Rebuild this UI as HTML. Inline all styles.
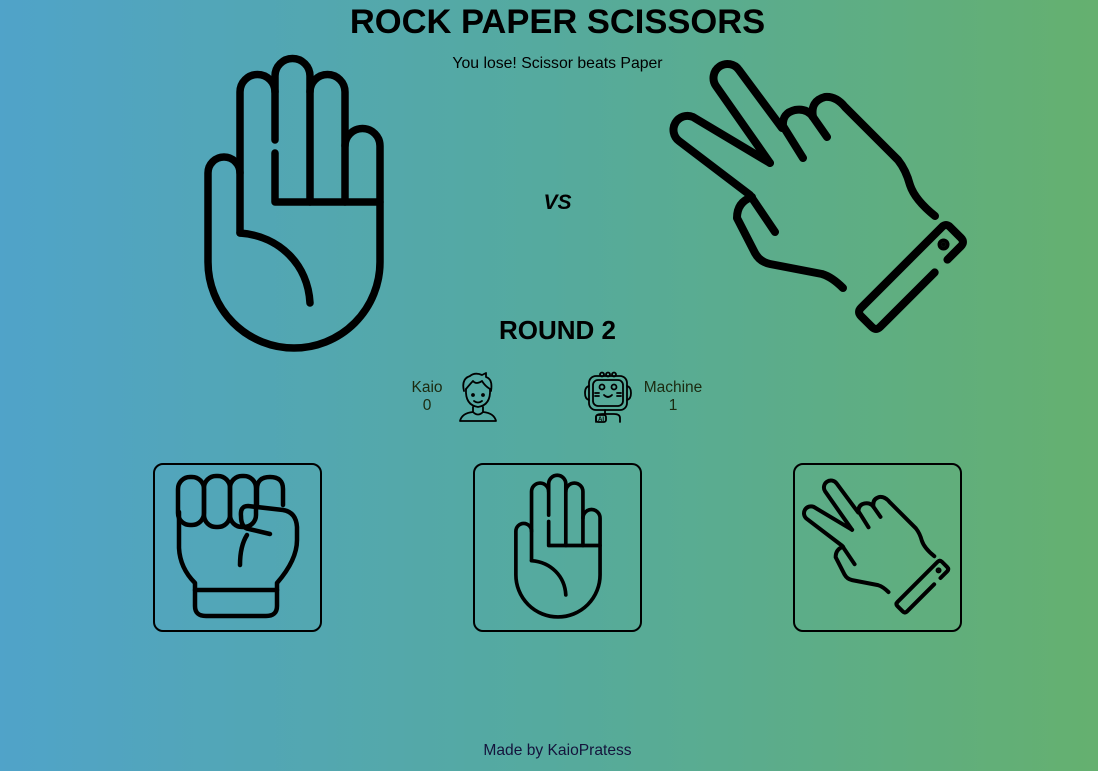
<!DOCTYPE html>
<html><head><meta charset="utf-8">
<style>
html,body{margin:0;padding:0;}
body{width:1098px;height:771px;overflow:hidden;position:relative;
background:linear-gradient(90deg,#50a3c9 0%,#55aa9e 50%,#65b06f 100%);
font-family:"Liberation Sans",Arial,sans-serif;color:#000;}
.t{position:absolute;left:0;width:1115px;text-align:center;white-space:nowrap;}
svg{position:absolute;overflow:visible;}
.box{position:absolute;top:463px;width:165px;height:165px;border:2px solid #000;border-radius:10px;}
</style></head><body>
<svg width="0" height="0" style="position:absolute">
<defs>
<symbol id="paper" viewBox="196 50 190 302">
<g fill="none" stroke="#000" stroke-width="7.5" stroke-linecap="round" stroke-linejoin="round">
<path d="M240 233 V92 A17.5 17.5 0 0 1 275 92 V140 M275 153 V202 H380"/>
<path d="M275 92 V76 A17.5 17.5 0 0 1 310 76 V202"/>
<path d="M310 92 A17.5 17.5 0 0 1 345 92 V202"/>
<path d="M345 146 A17.5 17.5 0 0 1 380 146 V262 A86 86 0 0 1 208 262 V173 A16 16 0 0 1 240 173"/>
<path d="M240 233 C280 236 308 265 310 303"/>
</g></symbol>
<symbol id="sci" viewBox="668 55 306 287">
<g fill="none" stroke="#000" stroke-width="8" stroke-linecap="round" stroke-linejoin="round">
<path d="M770 163 L716 86 A14 14 0 0 1 739 70 L782 128"/>
<path d="M770 163 L693 117 A14 14 0 0 0 679 141 L750 195"/>
<path d="M752 197 Q737 202 737 218 L755 253 Q760 262 770 264 L822 274 Q832 277 843 288"/>
<path d="M752 198 L775 232"/>
<path d="M803 158 L783 126 Q782 113 795 110 Q807 108 813 117"/>
<path d="M827 137 L813 117 Q810 101 825 97 Q836 96 845 107 L898 160 Q906 170 910 185 Q915 200 935 216"/>
<g transform="translate(911,277) rotate(-45)">
<path d="M20 13.5 H-57 Q-63 13.5 -63 7.5 V-7.5 Q-63 -13.5 -57 -13.5 H57 Q63 -13.5 63 -7.5 V7.5 Q63 13.5 57 13.5 H38"/>
<circle cx="46" cy="0" r="2" fill="#000"/>
</g>
</g></symbol>
</defs></svg>

<div class="t" style="top:3px;font-size:34.5px;font-weight:bold;">ROCK PAPER SCISSORS</div>
<div class="t" style="top:55px;font-size:15.8px;">You lose! Scissor beats Paper</div>

<svg style="left:196px;top:50px" width="190" height="302"><use href="#paper"/></svg>
<div class="t" style="top:191px;font-size:21px;font-weight:bold;font-style:italic;">VS</div>
<svg style="left:668px;top:55px" width="306" height="287"><use href="#sci"/></svg>

<div class="t" style="top:315px;font-size:26px;font-weight:bold;">ROUND 2</div>

<div style="position:absolute;left:400px;top:379px;width:54px;text-align:center;font-size:15.5px;line-height:18px;color:#1b2a10;">Kaio<br>0</div>
<svg style="left:458px;top:371px" width="40" height="52" viewBox="0 0 40 52">
<g fill="none" stroke="#000" stroke-width="1.8" stroke-linecap="round" stroke-linejoin="round">
<path d="M6 20 Q3 8 12 5 Q17 1 24 4 L28 2 L28 6 Q35 8 33 20"/>
<path d="M8 18 Q13 12 15 10 Q18 14 24 10 Q27 15 32 18"/>
<path d="M8 18 Q7 34 20 36 Q33 34 32 18"/>
<path d="M15 36 V41 Q4 42 2 50 H38 Q36 42 25 41 V36"/>
<path d="M15 41 Q20 46 25 41"/>
<circle cx="15" cy="24" r="1" fill="#000"/><circle cx="25" cy="24" r="1" fill="#000"/>
<path d="M16 30 Q20 33 24 30"/>
</g></svg>

<svg style="left:582px;top:371px" width="52" height="52" viewBox="0 0 52 52">
<g fill="none" stroke="#000" stroke-width="1.8" stroke-linecap="round" stroke-linejoin="round">
<rect x="7" y="5" width="38" height="34" rx="7"/>
<rect x="11" y="9" width="30" height="26" rx="5"/>
<circle cx="20" cy="3.5" r="2"/><circle cx="26" cy="3.5" r="2"/><circle cx="32" cy="3.5" r="2"/>
<path d="M7 15 Q3 16 3 22 Q3 28 7 29 M45 15 Q49 16 49 22 Q49 28 45 29"/>
<circle cx="20" cy="16" r="2.5"/><circle cx="32" cy="16" r="2.5"/>
<path d="M22 24 Q26 28 30 24 M13 22 H17 M13 25 H17 M35 22 H39 M35 25 H39"/>
<path d="M23 39 V43 M14 51 V46 Q14 43 20 43 H32 Q38 43 38 47 V51"/>
<rect x="14" y="44" width="10" height="7" rx="2"/>
</g>
<text x="16" y="50" font-size="6" font-family="Liberation Sans" font-weight="bold">AI</text>
</svg>
<div style="position:absolute;left:638px;top:379px;width:70px;text-align:center;font-size:15.5px;line-height:18px;color:#1b2a10;">Machine<br>1</div>

<div class="box" style="left:153px"></div>
<div class="box" style="left:473px"></div>
<div class="box" style="left:793px"></div>

<svg style="left:154px;top:463px" width="168" height="168" viewBox="154 463 168 168">
<g fill="none" stroke="#000" stroke-width="4.5" stroke-linecap="round" stroke-linejoin="round">
<rect x="178" y="477" width="26" height="48" rx="12"/>
<rect x="204" y="476" width="26" height="51" rx="12"/>
<rect x="230" y="476" width="26" height="51" rx="12"/>
<path d="M257 505 V489 Q257 477 270 477 Q283 477 283 489 V505"/>
<path d="M179 512 V548 Q180 568 195 583 V606 Q195 616 206 616 H266 Q277 616 277 606 V583 Q297 560 297 540 V527 Q296 512 283 510 L248 506 Q240 506 241 516 Q241 528 249 529 L270 534"/>
<path d="M195 590 H277"/>
<path d="M247 535 Q240 546 240 565"/>
</g></svg>

<svg style="left:510px;top:471px" width="93" height="148"><use href="#paper"/></svg>
<svg style="left:801px;top:476px" width="153" height="143"><use href="#sci"/></svg>

<div class="t" style="top:742px;font-size:15.6px;color:#14143c;">Made by KaioPratess</div>
</body></html>
